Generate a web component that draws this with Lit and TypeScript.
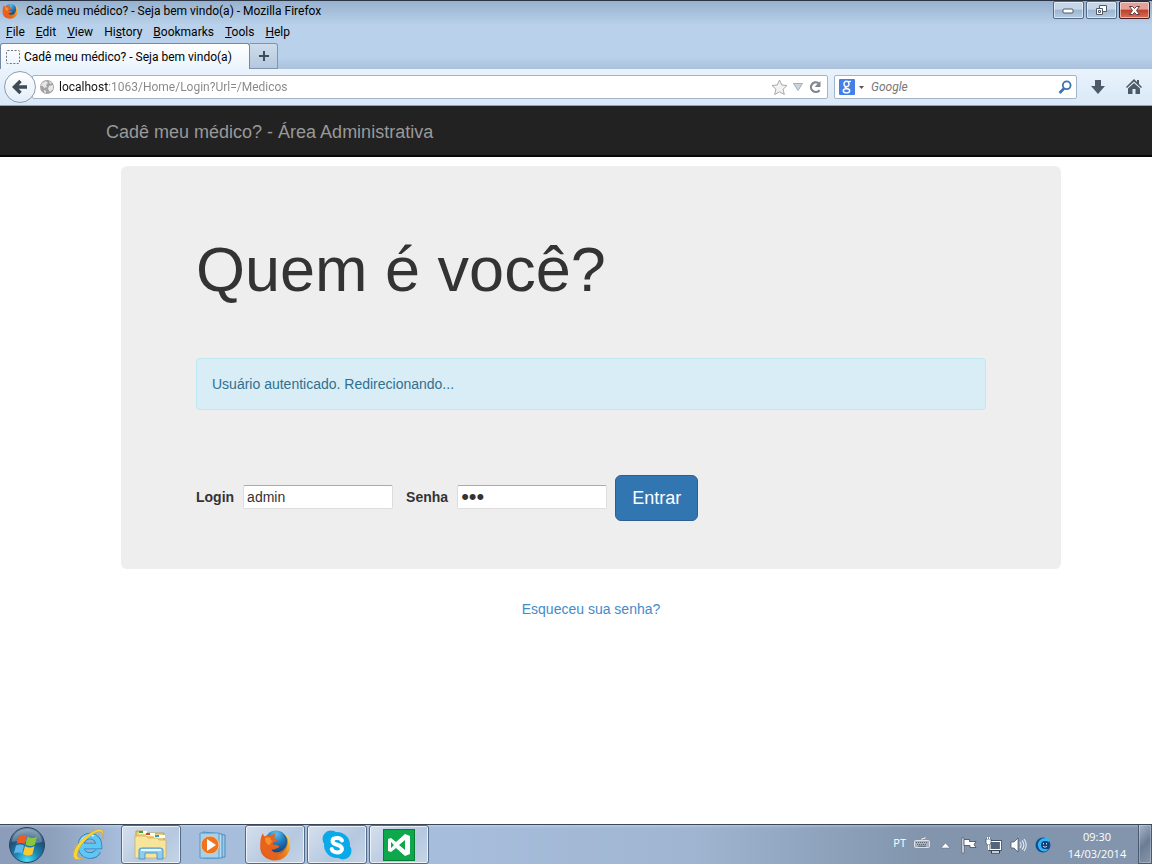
import { LitElement, html, css, svg } from "lit";
import { customElement, state } from "lit/decorators.js";

const firefoxArt = svg`
  <defs>
    <linearGradient id="tail" x1="0" y1="1" x2="1" y2="0"><stop offset="0" stop-color="#d9481c"></stop><stop offset=".55" stop-color="#f0861f"></stop><stop offset="1" stop-color="#ffe14d"></stop></linearGradient>
    <radialGradient id="globe" cx=".5" cy=".15" r=".9"><stop offset="0" stop-color="#5fc0ea"></stop><stop offset=".5" stop-color="#1f78bd"></stop><stop offset="1" stop-color="#123a78"></stop></radialGradient>
  </defs>
  <path d="M28 6C33 13 32 23 26 28C19 34 8 32 3 25C0 20 1 13 4 9Z" fill="url(#tail)"></path>
  <circle cx="17" cy="12.500" r="11" fill="url(#globe)"></circle>
  <path d="M23 5C28 9 28 16 25 20C23 23 20 24 18 24L21 28C27 26 31 21 30 14C29 9 27 6 23 5Z" fill="#123a78" opacity=".35"></path>
  <path d="M28 6C30 11 29 18 26 21C25 23 22 25 19 25C16 25 13 23 12 20L8 23L17 30C25 30 31 24 31 17C31 12 30 9 28 6Z" fill="url(#tail)"></path>
  <path d="M4 4C4 6 5 7 6 7.500C8 6 10 6 12 7C13 5.500 15 4.500 17 4.500C15.500 6 15 8 15.500 9.500C17 10 18.500 10 18 11.500C17 13 14 13 13.500 15C15 16 18 15.500 20 17C21 18 19 19 17 19.500C15 20.500 14 21 12 20C14 24 18 25 21 24C19 27 16 28 13 27C7 27 2 22 1.500 16C1 11 2 7 4 4Z" fill="#e8621d"></path>
  <path d="M6 9C8 8 10 8 12 9.500C11 11 12 12 14 12C12 13 11 14 11 16C8 16 6 13 6 9Z" fill="#f7922b"></path>`;

const star = svg`<path d="M8.500 1L10.800 6L16 6.500L12.100 10.200L13.300 15.500L8.500 12.800L3.700 15.500L4.900 10.200L1 6.500L6.200 6Z" fill="#f2f2f2" stroke="#a9a9a9"></path>`;

interface Task {
  name: string;
  open: boolean;
  art: unknown;
}

const tasks: Task[] = [
  {
    name: "Internet Explorer",
    open: false,
    art: svg`<svg width="34" height="34" viewBox="0 0 34 34">
      <path d="M10 18H27C27 12 23 8 18 8S9 12 9 18S13 27.500 18 27.500C22 27.500 24.500 26 26 23" fill="none" stroke="#2380c3" stroke-width="6.500"></path>
      <path d="M10 18H27C27 12 23 8 18 8S9 12 9 18S13 27.500 18 27.500C22 27.500 24.500 26 26 23" fill="none" stroke="#5ec8f5" stroke-width="5"></path>
      <path d="M8 14C10 9 16 6 22 8" fill="none" stroke="#c8effd" stroke-width="1.500"></path>
      <path d="M31 11C33 3 30 -1 23 2.500C11 8 0 21 1.500 28.500C2.500 33 8 32 12 29C7 31 4.500 30 5.500 25C7.500 17 17 7.500 24 4.500C29 2.500 31.500 4 31 11Z" fill="#f9d637" stroke="#d6a31f" stroke-width=".6"></path></svg>`,
  },
  {
    name: "Windows Explorer",
    open: true,
    art: svg`<svg width="34" height="34" viewBox="0 0 34 34">
      <path d="M2 3H9L11 5H30V28H2Z" fill="#e9cf78" stroke="#b8973d" stroke-width=".8"></path>
      <path d="M5 3H13V6H5Z" fill="#fffef2"></path><path d="M5 3H9V5H5Z" fill="#30a845"></path>
      <path d="M12 5H21V8H12Z" fill="#fffef2"></path><path d="M12 5H16V7H12Z" fill="#d44426"></path>
      <path d="M20 7H31V10H20Z" fill="#fffef2"></path><path d="M21 7H25V9H21Z" fill="#3299d8"></path>
      <path d="M1 8H12L14 10H23L25 12H32V30H1Z" fill="#f8e59c" stroke="#cfb05a" stroke-width=".8"></path>
      <path d="M5 31V22Q5 20 8 20H26Q29 20 29 22V31H23V25H11V31Z" fill="#8fccec" stroke="#5098c7"></path>
      <path d="M7 22H27" stroke="#e5f8ff" stroke-width="2"></path></svg>`,
  },
  {
    name: "Windows Media Player",
    open: false,
    art: svg`<svg width="30" height="28" viewBox="0 0 30 28">
      <path d="M9 2L27 4V26L9 27Z" fill="#9cc8e6" stroke="#4b8dbd"></path>
      <path d="M5 1L24 3V27L5 27Z" fill="#b9dcf0" stroke="#4b8dbd"></path>
      <path d="M2 2H21V27H2Z" fill="#a5d1ec" stroke="#5699c6"></path>
      <circle cx="12" cy="14" r="9" fill="#ee7420" stroke="#f8c49a"></circle>
      <path d="M9 8L18 14L9 20Z" fill="#fff"></path></svg>`,
  },
  {
    name: "Mozilla Firefox",
    open: true,
    art: svg`<svg width="32" height="32" viewBox="0 0 32 32">${firefoxArt}</svg>`,
  },
  {
    name: "Skype",
    open: true,
    art: svg`<svg width="32" height="32" viewBox="0 0 32 32">
      <circle cx="10" cy="10" r="8.500" fill="#0aa9e8"></circle><circle cx="22" cy="22" r="8.500" fill="#0aa9e8"></circle>
      <circle cx="16" cy="16" r="13" fill="#0aa9e8"></circle>
      <path d="M21 11.500C19.500 8 11.500 8 11.500 12C11.500 17 21 14.500 21 20C21 24.500 12 24.500 10.700 20" fill="none" stroke="#fff" stroke-width="4" stroke-linecap="round"></path></svg>`,
  },
  {
    name: "Visual Studio",
    open: true,
    art: svg`<svg width="32" height="32" viewBox="0 0 32 32">
      <rect width="32" height="32" fill="#0a7d35"></rect><rect x="1" y="1" width="30" height="30" fill="#0da84b"></rect>
      <path d="M5 10L8 9L13 13L22 5L27 7V25L22 27L13 19L8 23L5 22ZM8 13V19L11 16ZM22 11L16 16L22 21Z" fill="#fff" fill-rule="evenodd"></path></svg>`,
  },
];

@customElement("browser-chrome")
class BrowserChrome extends LitElement {
  static styles = css`
    :host {
      display: block;
      font: 12px/16px Roboto, "Open Sans", sans-serif;
      color: #000;
      background: linear-gradient(#96b1cf 0, #b9d1ea 24px, #b9d1ea 56px, #a9c0da 69px);
      border-top: 1px solid #2b3445;
    }
    button {
      font: inherit;
      color: inherit;
      background: none;
      border: 0;
      padding: 0;
      display: flex;
      align-items: center;
      justify-content: center;
    }
    svg { display: block; flex: none; }
    .title { display: flex; height: 20px; align-items: center; gap: 8px; padding: 0 2px; }
    .caption { flex: 1; white-space: nowrap; }
    .controls { display: flex; gap: 2px; align-self: flex-start; }
    .control {
      width: 31px;
      height: 18px;
      border: 1px solid #566b87;
      border-radius: 2px;
      box-shadow: inset 0 0 0 1px #ffffff80;
      background: linear-gradient(#c5d6e9 0 45%, #9db5d0 50%, #b5cbe3);
    }
    .close { border-color: #4d1b22; background: linear-gradient(#e3a197 0 45%, #be3e28 50%, #d4715b); }
    .menu { display: flex; height: 22px; align-items: center; gap: 11px; padding: 0 6px; }
    .tabs { display: flex; height: 26px; }
    .tab {
      flex: 0 0 250px;
      justify-content: flex-start;
      gap: 4px;
      padding: 0 5px;
      white-space: nowrap;
      border: 1px solid #7488a1;
      border-bottom: 0;
      border-radius: 3px 3px 0 0;
      background: linear-gradient(#fff, #eaf3fc);
    }
    .plus {
      width: 28px;
      border: 1px solid #8094ad;
      border-left: 0;
      border-radius: 0 3px 0 0;
      background: linear-gradient(#cfdceb, #b4c8de);
    }
    .bar {
      display: flex;
      align-items: center;
      height: 37px;
      box-sizing: border-box;
      padding: 0 10px 0 4px;
      border-bottom: 1px solid #8ea3bb;
      background: linear-gradient(#eaf3fc, #d9e8f8);
    }
    .back {
      width: 32px;
      height: 32px;
      flex: none;
      border: 1px solid #8c9cb2;
      border-radius: 50%;
      background: linear-gradient(#fff, #e3edf8);
      z-index: 1;
    }
    .field {
      display: flex;
      align-items: center;
      height: 24px;
      box-sizing: border-box;
      border: 1px solid #a3b5cb;
      border-radius: 2px;
      background: #fff;
    }
    .address { flex: 1; margin-left: -4px; padding: 0 5px 0 7px; gap: 5px; }
    .search { flex: 0 0 243px; margin: 0 12px 0 6px; padding: 0 4px; }
    input {
      flex: 1;
      min-width: 0;
      border: 0;
      padding: 0;
      outline: 0;
      font: 12px/20px Roboto, "Open Sans", sans-serif;
      background: none;
    }
    .url {
      color: transparent;
      background: linear-gradient(90deg, #111 49px, #868686 49px);
      background-clip: text;
      -webkit-background-clip: text;
    }
    .query::placeholder { color: #777; font-style: italic; opacity: 1; }
    .engine { gap: 4px; margin-right: 7px; }
    .tools { display: flex; gap: 19px; }
  `;

  render() {
    return html`
      <div class="title">
        <svg width="16" height="16" viewBox="0 0 32 32">${firefoxArt}</svg>
        <span class="caption">Cadê meu médico? - Seja bem vindo(a) - Mozilla Firefox</span>
        <div class="controls">
          <button class="control" aria-label="Minimize">
            <svg width="13" height="7"><rect x="1" y="2" width="10" height="4" rx="1" fill="#fff" stroke="#535a66"></rect></svg>
          </button>
          <button class="control" aria-label="Restore">
            <svg width="13" height="12" fill="#fff" stroke="#535a66"><path d="M4.500 1.500H11.500V7.500H4.500Z"></path><path d="M1.500 4.500H7.500V10.500H1.500Z"></path><path d="M3.500 6.500H5.500V8.500H3.500Z"></path></svg>
          </button>
          <button class="control close" aria-label="Close">
            <svg width="13" height="11"><path d="M1.500 1.500H4.500L6.500 3.500L8.500 1.500H11.500L8.500 5.500L11.500 9.500H8.500L6.500 7.500L4.500 9.500H1.500L4.500 5.500Z" fill="#fff" stroke="#5b3a40"></path></svg>
          </button>
        </div>
      </div>
      <nav class="menu">
        <button><span><u>F</u>ile</span></button>
        <button><span><u>E</u>dit</span></button>
        <button><span><u>V</u>iew</span></button>
        <button><span>Hi<u>s</u>tory</span></button>
        <button><span><u>B</u>ookmarks</span></button>
        <button><span><u>T</u>ools</span></button>
        <button><span><u>H</u>elp</span></button>
      </nav>
      <div class="tabs">
        <button class="tab">
          <svg width="14" height="14"><rect x=".5" y=".5" width="13" height="13" rx="1" fill="none" stroke="#6c7480" stroke-dasharray="2 1.500"></rect></svg>
          Cadê meu médico? - Seja bem vindo(a)
        </button>
        <button class="plus" aria-label="New tab">
          <svg width="12" height="12"><path d="M6 1V11M1 6H11" stroke="#414c59" stroke-width="2"></path></svg>
        </button>
      </div>
      <div class="bar">
        <button class="back" aria-label="Back">
          <svg width="18" height="18" fill="none" stroke="#3f4a57" stroke-width="3.500"><path d="M3 9H16M9.500 3L3.500 9L9.500 15"></path></svg>
        </button>
        <div class="field address">
          <svg width="14" height="14"><circle cx="7" cy="7" r="7" fill="#a3a3a3"></circle><path d="M2 3L6 1L8 3L6 5L7 7L4 8L3 6L1 6ZM9 6L13 5L13 9L10 12L8 9ZM4 10L6 11L6 13L4 12ZM9 1L12 3L10 4Z" fill="#e6e6e6"></path></svg>
          <input class="url" aria-label="Address" value="localhost:1063/Home/Login?Url=/Medicos">
          <svg width="17" height="17">${star}</svg>
          <svg width="10" height="8"><path d="M.5 .5H9.500L5 7.500Z" fill="#ccd4dd" stroke="#a5afbb"></path></svg>
          <svg width="14" height="14"><path d="M11.500 10.200A4.800 4.800 0 1 1 10.500 3.200" fill="none" stroke="#7f868f" stroke-width="2.200"></path><path d="M12.500 1V7H6.500Z" fill="#7f868f"></path></svg>
        </div>
        <div class="field search">
          <button class="engine" aria-label="Search engine">
            <svg width="16" height="16"><rect width="16" height="16" rx="1" fill="#4480e8"></rect><g fill="none" stroke="#fff"><ellipse cx="7.500" cy="5" rx="2.500" ry="2.700" stroke-width="1.400"></ellipse><path d="M9 2.700L12 2.300M7 7.700C4.500 9 8 9 9.500 10" stroke-width="1.200"></path><ellipse cx="7.500" cy="11.800" rx="3.200" ry="2.100" stroke-width="1.400"></ellipse></g></svg>
            <svg width="5" height="3"><path d="M0 0H5L2.500 3Z" fill="#555"></path></svg>
          </button>
          <input class="query" aria-label="Search" placeholder="Google">
          <svg width="14" height="14" fill="none" stroke="#3b72b0"><circle cx="8.700" cy="5.300" r="3.900" stroke-width="1.800"></circle><path d="M6 8.500L1.500 13" stroke-width="2.600"></path></svg>
        </div>
        <div class="tools">
          <button aria-label="Downloads"><svg width="18" height="16"><path d="M6 1H12V7H16L9 15L2 7H6Z" fill="#4d5966"></path></svg></button>
          <button aria-label="Home"><svg width="16" height="16"><path d="M8 0L11 3V1H13V5L16 8L15 9L8 2.500L1 9L0 8Z" fill="#4d5966"></path><path d="M8 4L14 9.500V15H9.500V10H6.500V15H2V9.500Z" fill="#4d5966"></path></svg></button>
        </div>
      </div>
    `;
  }
}

@customElement("login-page")
class LoginPage extends LitElement {
  static styles = css`
    :host {
      display: block;
      font: 14px/20px "Liberation Sans", Arial, sans-serif;
      color: #333;
      background: #fff;
    }
    .navbar { background: #222; border-bottom: 2px solid #080808; }
    .container { max-width: 970px; margin: 0 auto; box-sizing: border-box; }
    .brand { display: block; padding: 16px 15px 13px; width: fit-content; color: #999; font-size: 18px; line-height: 20px; text-decoration: none; }
    .main { padding: 9px 0 0 30px; }
    .jumbotron { background: #eee; border-radius: 6px; padding: 72px 75px 48px; }
    h1 { margin: 0 0 57px; font-size: 63px; line-height: 63px; font-weight: 500; }
    .alert {
      margin: 0 0 65px;
      padding: 15px;
      border: 1px solid #bce8f1;
      border-radius: 4px;
      background: #d9edf7;
      color: #31708f;
    }
    form { display: flex; flex-wrap: wrap; align-items: center; gap: 8px; }
    label { font-weight: bold; margin: 0 1px 2px 0; }
    .second { margin-left: 5px; }
    input {
      width: 150px;
      height: 24px;
      box-sizing: border-box;
      margin: 0 0 2px;
      padding: 1px 3px;
      border: 1px solid #ddd;
      border-top-color: #aaa;
      border-radius: 2px;
      background: #fff;
      color: #333;
      font: inherit;
      outline: 0;
    }
    .secret { font-size: 22px; }
    .submit {
      padding: 10px 16px;
      border: 1px solid #2d6092;
      border-radius: 6px;
      background: #3276b1;
      color: #fff;
      font: 18px/24px "Liberation Sans", Arial, sans-serif;
    }
    .forgot { margin: 30px 0; text-align: center; }
    .forgot a { color: #428bca; text-decoration: none; }
  `;

  @state() private message = "Usuário autenticado. Redirecionando...";

  render() {
    return html`
      <header class="navbar">
        <div class="container"><a class="brand" href="#">Cadê meu médico? - Área Administrativa</a></div>
      </header>
      <main class="container main">
        <section class="jumbotron">
          <h1>Quem é você?</h1>
          <div class="alert" role="status">${this.message}</div>
          <form @submit=${(e: Event) => e.preventDefault()}>
            <label for="login">Login</label>
            <input id="login" type="text" value="admin">
            <label class="second" for="senha">Senha</label>
            <input id="senha" class="secret" type="password" value="123">
            <button class="submit">Entrar</button>
          </form>
        </section>
        <p class="forgot"><a href="#">Esqueceu sua senha?</a></p>
      </main>
    `;
  }
}

@customElement("task-bar")
class TaskBar extends LitElement {
  static styles = css`
    :host {
      display: flex;
      height: 40px;
      box-sizing: border-box;
      border-top: 1px solid #39475a;
      background: linear-gradient(#ffffff40, #ffffff00 3px), linear-gradient(90deg, #8b9dba 0, #8c9fbb 50px, #a6bddb 120px, #a6bddb 40%, #9fb5d1 60%, #8295ad 80%);
      color: #fff;
      font: 11px/17px "Open Sans", "Noto Sans", sans-serif;
    }
    button {
      background: none;
      border: 0;
      padding: 0;
      color: inherit;
      font: inherit;
      display: flex;
      align-items: center;
      justify-content: center;
    }
    svg { display: block; flex: none; }
    .start { width: 54px; margin-right: 5px; }
    .tasks { display: flex; gap: 2px; flex: 1; }
    .task { width: 60px; }
    .open {
      border: 1px solid #536a88;
      border-radius: 3px;
      box-shadow: inset 0 0 0 1px #ffffffb0;
      background: linear-gradient(135deg, #d5e0ee, #b5c8df 60%, #c5d5e8);
    }
    .tray { display: flex; align-items: center; }
    .status { display: flex; align-items: center; gap: 8px; }
    .lang { display: flex; align-items: center; gap: 8px; margin: 0 1px 4px 0; }
    .clock { margin-left: 5px; width: 82px; flex-direction: column; }
    .desk { width: 14px; align-self: stretch; border: 1px solid #4b5a6e; border-top: 0; background: linear-gradient(135deg, #a8b6c8, #6b7d95 50%, #8797ac); box-shadow: inset 0 0 0 1px #ffffff40; }
  `;

  render() {
    return html`
      <button class="start" aria-label="Start">
        <svg width="38" height="38" viewBox="0 0 38 38">
          <defs>
            <radialGradient id="orb" cx=".5" cy=".95" r=".95"><stop offset="0" stop-color="#4fe0f5"></stop><stop offset=".35" stop-color="#1d88b8"></stop><stop offset=".7" stop-color="#1f5076"></stop><stop offset="1" stop-color="#7795ae"></stop></radialGradient>
          </defs>
          <circle cx="19" cy="19" r="17.500" fill="url(#orb)" stroke="#26435f"></circle>
          <path d="M4 16C5 6 13 3 19 3S33 6 34 16C25 19 13 13 4 16Z" fill="#fff" opacity=".25"></path>
          <path d="M11 10C14 8 16 9 18.500 10L16.500 18C14 16.500 11 16.500 8.500 18Z" fill="#ee5a24"></path>
          <path d="M19.500 10.500C22.500 12.500 26 12.500 29 10.500L27 18.500C24 20.500 20.500 20.500 17.500 18.500Z" fill="#8cc63e"></path>
          <path d="M8 19.500C11 18 13.500 18 16 19.500L14 27.500C11.500 26 8.500 26 6 27.500Z" fill="#5fb6ea"></path>
          <path d="M17 20C20 22 23.500 22 26.500 20L24.500 28C21.500 30 18 30 15 28Z" fill="#fcc92e"></path>
        </svg>
      </button>
      <div class="tasks">
        ${tasks.map((t) => html`<button class="task ${t.open ? "open" : ""}" aria-label=${t.name}>${t.art}</button>`)}
      </div>
      <div class="tray">
        <div class="status">
          <div class="lang">
            <span>PT</span>
            <svg width="16" height="11"><rect x=".5" y="3.500" width="15" height="7" rx="1" fill="#a9b1bd" stroke="#dde1e6"></rect><path d="M2 5.500H14M3 7.500H13" stroke="#5a6472" stroke-dasharray="1 1"></path><path d="M4 9.200H12" stroke="#5a6472"></path><path d="M8 3V1.500H11V0" stroke="#dfe3e8" fill="none"></path></svg>
          </div>
          <button aria-label="Show hidden icons"><svg width="13" height="8"><path d="M2 7L6.500 2L11 7Z" fill="#fff" stroke="#56667a" stroke-width=".5"></path></svg></button>
          <svg width="17" height="18"><path d="M2 2H4V17H2Z" fill="#fff" stroke="#3f4b5b" stroke-width=".6"></path><path d="M4 3.500H9.500V5.500H16L14 8.500L16 11.500H10V9.500H4Z" fill="#fff" stroke="#3f4b5b" stroke-width=".8"></path></svg>
          <svg width="17" height="18"><path d="M4.500 5.500H15.500V13.500H4.500Z" fill="#52657d" stroke="#2f3b4b" stroke-width="2.500"></path><path d="M5 5.500H15.500V13.500H5Z" fill="#52657d" stroke="#fff" stroke-width="1.200"></path><path d="M6 16H15" stroke="#2f3b4b" stroke-width="3"></path><path d="M7 16H14" stroke="#fff" stroke-width="1.500"></path><path d="M1 3H6V7L4.500 9H2.500L1 7Z" fill="#fff" stroke="#3f4b5b" stroke-width=".7"></path><path d="M2.500 1V3M4.500 1V3M3.500 9V14" stroke="#fff"></path></svg>
          <svg width="17" height="18"><path d="M1 6H4L8 2V16L4 12H1Z" fill="#fff" stroke="#3f4b5b" stroke-width=".7"></path><path d="M10 6C11.500 8 11.500 10 10 12M12 4.500C14.500 7 14.500 11 12 13.500M14 3C17 7 17 11 14 15" fill="none" stroke="#e7ebf0" stroke-width="1.100"></path></svg>
          <svg width="16" height="18"><circle cx="8" cy="9" r="7.500" fill="#0c4f93"></circle><path d="M15 3C9 0 2 4 3 10C4 16 11 17 14 13C9 14 6 11 7 8C8 5 11 4 14 6Z" fill="#36b3ec"></path><circle cx="10" cy="9" r="4" fill="#0d3f80"></circle><path d="M8.500 7V8.500M11.500 7V8.500M8 10C9 11.500 11 11.500 12 10" stroke="#fff" fill="none" stroke-width=".8"></path></svg>
        </div>
        <button class="clock"><span>09:30</span><span>14/03/2014</span></button>
        <button class="desk" aria-label="Show desktop"></button>
      </div>
    `;
  }
}

@customElement("app-root")
class AppRoot extends LitElement {
  static styles = css`
    :host { display: flex; flex-direction: column; min-height: 100vh; }
    .page { flex: 1; }
  `;

  render() {
    return html`
      <browser-chrome></browser-chrome>
      <login-page class="page"></login-page>
      <task-bar></task-bar>
    `;
  }
}
